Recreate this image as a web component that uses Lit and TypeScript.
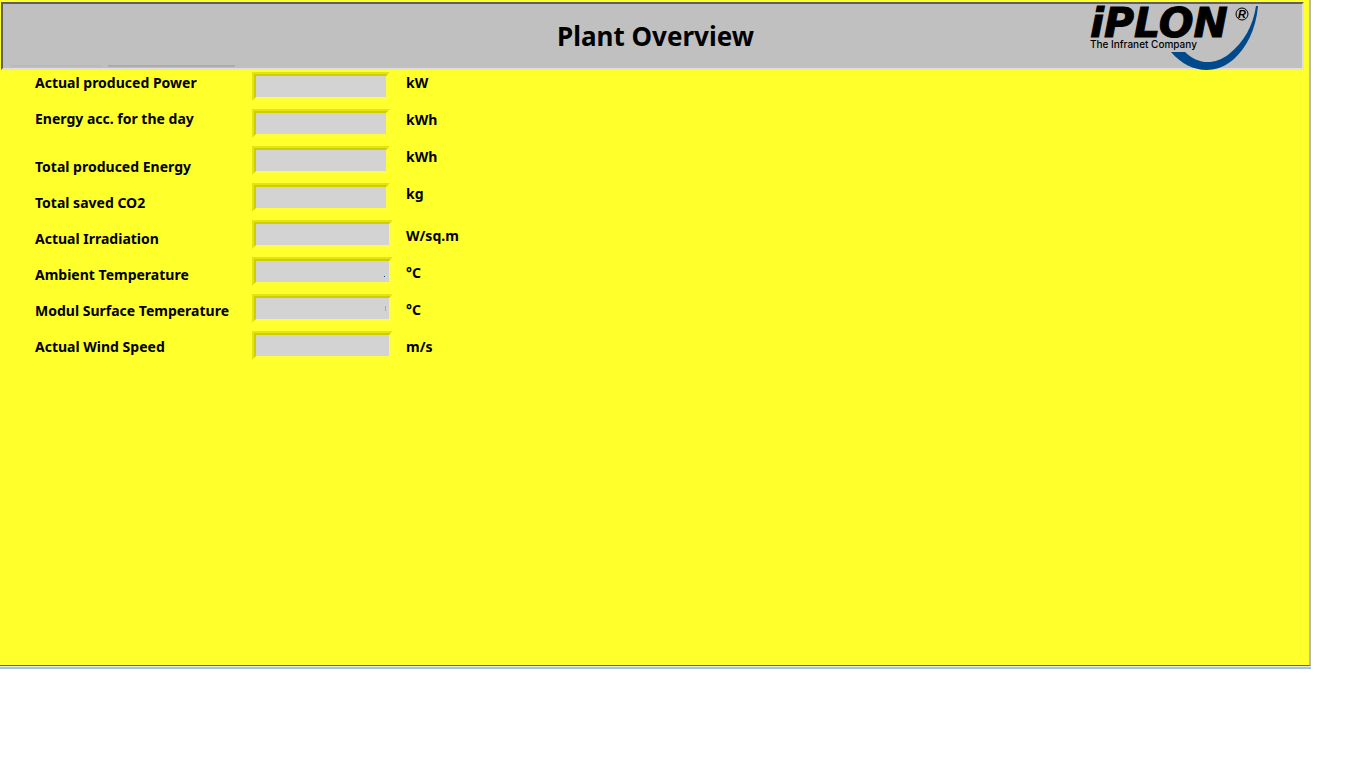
import { LitElement, html, css, svg } from "lit";
import { customElement } from "lit/decorators.js";

interface Reading {
  id: string;
  label: string;
  unit: string;
  wide?: boolean;
  mark?: string;
}

const READINGS: Reading[] = [
  { id: "power", label: "Actual produced Power", unit: "kW" },
  { id: "day-energy", label: "Energy acc. for the day", unit: "kWh" },
  { id: "total-energy", label: "Total produced Energy", unit: "kWh" },
  { id: "co2", label: "Total saved CO2", unit: "kg" },
  { id: "irradiation", label: "Actual Irradiation", unit: "W/sq.m", wide: true },
  { id: "ambient", label: "Ambient Temperature", unit: "°C", wide: true, mark: "dot" },
  { id: "module", label: "Modul Surface Temperature", unit: "°C", wide: true, mark: "tick" },
  { id: "wind", label: "Actual Wind Speed", unit: "m/s", wide: true },
];

@customElement("plant-logo")
export class PlantLogo extends LitElement {
  static styles = css`
    :host { display: block; width: 170px; height: 64px; }
    .logo { display: block; overflow: visible; }
    .brand { font: italic bold 41px "DejaVu Sans", sans-serif; stroke: #000; stroke-width: 1px; }
    .tagline { font: 500 10px "Inter", sans-serif; }
    .reg { font: italic 700 11px "Liberation Sans", sans-serif; }
  `;

  render() {
    return html`<svg class="logo" width="170" height="64" viewBox="0 0 170 64" role="img" aria-label="iPLON">
      ${svg`
        <path fill="#004a8c" d="M81 48 H95 C107 60 124 62 139 50 C154 38 163 22 166 2 H168 C166 26 156 44 144 55 C125 72 99 69 81 48Z"/>
        <text class="brand" x="0" y="33">iPLON</text>
        <circle cx="152" cy="10" r="6" fill="none" stroke="#000" stroke-width="1"/>
        <text class="reg" x="148" y="14">R</text>
        <text class="tagline" x="0" y="44">The Infranet Company</text>
      `}
    </svg>`;
  }
}

@customElement("app-root")
export class AppRoot extends LitElement {
  static styles = css`
    :host {
      display: block;
      font: bold 14px/18px "Noto Sans", sans-serif;
      color: #000;
    }
    .window { margin-right: 55px; }
    .screen {
      box-sizing: border-box;
      min-height: calc(100vh - 108px);
      padding: 2px 5px 0 1px;
      background: #ffff2b;
      border-right: 2px solid #b8b8b8;
      border-bottom: 1px solid #606060;
    }
    .edge { height: 2px; border-top: 1px solid #e4ecf0; background: #a8c4dc; }
    .header {
      display: grid;
      grid-template-columns: 1fr auto 1fr;
      align-items: center;
      box-sizing: border-box;
      height: 68px;
      background: #c0c0c0;
      border: 2px solid;
      border-color: #606060 #dfdfdf #dfdfdf #606060;
    }
    .title { margin: 0; padding-left: 6px; font-size: 26px; line-height: 36px; }
    .tabs { display: flex; align-self: end; gap: 6px; padding: 0 0 1px 8px; }
    .tab { width: 91px; height: 2px; background: #bababa; }
    .tab.active { width: 127px; background: #acacac; }
    .logo { justify-self: end; margin-right: 42px; }
    .readings { display: flex; padding: 2px 0 0 34px; }
    .labels, .fields, .units { display: flex; flex-direction: column; }
    .labels { width: 217px; gap: 18px; padding-top: 2px; }
    .labels :nth-child(3) { margin-top: 12px; }
    .fields { width: 154px; gap: 8px; align-items: flex-start; }
    .units { gap: 19px; padding-top: 2px; }
    .units :nth-child(5) { margin-top: 5px; }
    .frame {
      position: relative;
      box-sizing: border-box;
      width: 138px;
      height: 29px;
      border: 2px solid;
      border-color: #e4e414 #ffff38 #ffff38 #e4e414;
    }
    .frame.wide { width: 141px; }
    .value {
      display: block;
      box-sizing: border-box;
      width: 100%;
      height: 25px;
      margin: 0;
      padding: 0 4px;
      border: 2px solid;
      border-color: #cfcf00 #ffff38 #ffff38 #cfcf00;
      border-style: solid;
      border-radius: 0;
      background: #d3d3d3;
      background-clip: padding-box;
      font: inherit;
      text-align: right;
      outline: none;
    }
    .mark { position: absolute; right: 6px; top: 17px; width: 1px; height: 1px; background: #004a8c; }
    .mark.tick { right: 5px; top: 10px; height: 5px; background: #8ab4bc; }
  `;

  render() {
    return html`
      <div class="window">
        <main class="screen">
          <header class="header">
            <div class="tabs"><span class="tab"></span><span class="tab active"></span></div>
            <h1 class="title">Plant Overview</h1>
            <plant-logo class="logo"></plant-logo>
          </header>
          <section class="readings">
            <div class="labels">${READINGS.map((r) => html`<label for=${r.id}>${r.label}</label>`)}</div>
            <div class="fields">
              ${READINGS.map((r) => html`<div class="frame ${r.wide ? "wide" : ""}">
                <input class="value" id=${r.id} type="text" readonly />
                ${r.mark ? html`<span class="mark ${r.mark}"></span>` : ""}
              </div>`)}
            </div>
            <div class="units">${READINGS.map((r) => html`<span>${r.unit}</span>`)}</div>
          </section>
        </main>
        <div class="edge"></div>
      </div>
    `;
  }
}
